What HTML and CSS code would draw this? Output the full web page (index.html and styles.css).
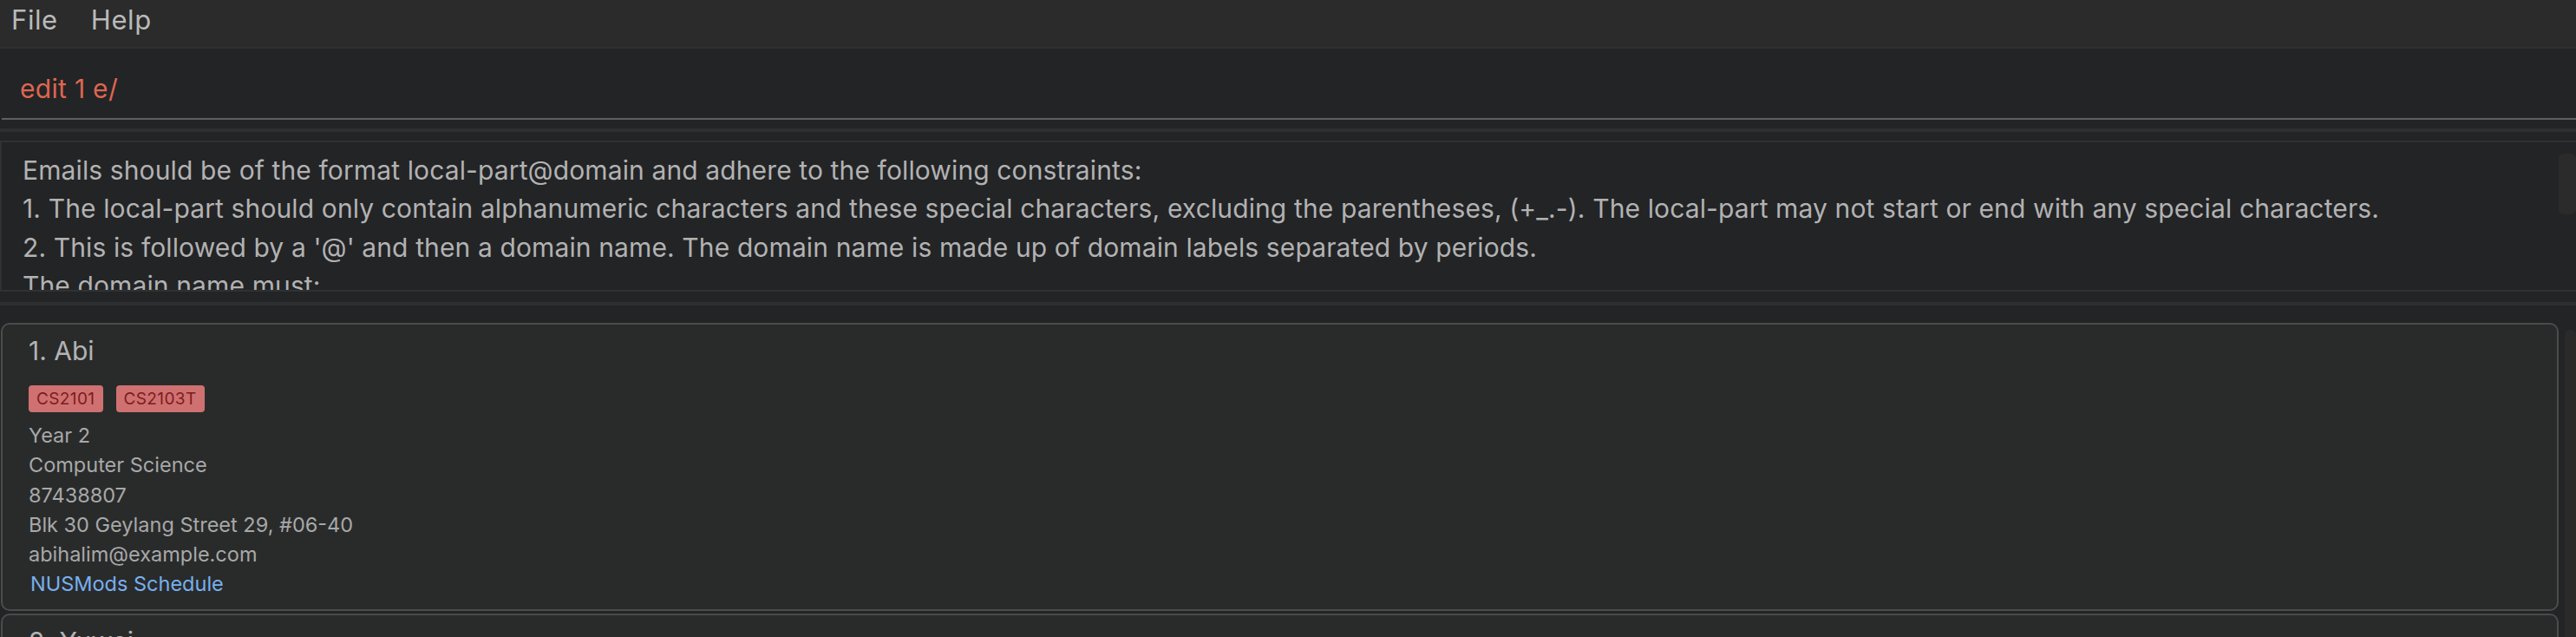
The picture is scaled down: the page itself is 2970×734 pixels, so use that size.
FILE: index.html
```html
<!DOCTYPE html>
<html lang="en">
<head>
<meta charset="utf-8">
<title>Address Book</title>
<link rel="stylesheet" href="styles.css">
</head>
<body>
<div class="app">
  <nav class="menubar">
    <span class="menu-item">File</span>
    <span class="menu-item">Help</span>
  </nav>
  <div class="command">
    <div class="command-field"><span class="cmd-text">edit 1 e/</span></div>
  </div>
  <div class="divider divider-top"></div>
  <div class="result">
    <div class="result-text"><div class="line">Emails should be of the format local-part@domain and adhere to the following constraints:</div><div class="line">1. The local-part should only contain alphanumeric characters and these special characters, excluding the parentheses, (+_.-). The local-part may not start or end with any special characters.</div><div class="line">2. This is followed by a '@' and then a domain name. The domain name is made up of domain labels separated by periods.</div><div class="line">The domain name must:</div></div>
    <div class="result-scroll"><div class="result-thumb"></div></div>
  </div>
  <div class="divider divider-bottom"></div>
  <div class="list">
    <div class="cards">
      <div class="card">
        <div class="card-name">1. Abi</div>
        <div class="tags">
          <span class="tag">CS2101</span>
          <span class="tag">CS2103T</span>
        </div>
        <div class="details">
          <div class="detail">Year 2</div>
          <div class="detail">Computer Science</div>
          <div class="detail">87438807</div>
          <div class="detail">Blk 30 Geylang Street 29, #06-40</div>
          <div class="detail">abihalim@example.com</div>
          <div class="detail"><span class="link">NUSMods Schedule</span></div>
        </div>
      </div>
      <div class="card">
        <div class="card-name">2. Yuwei</div>
      </div>
    </div>
    <div class="list-scroll"></div>
  </div>
</div>
</body>
</html>
```
FILE: styles.css
```css
html, body {
  margin: 0;
  padding: 0;
}
body {
  width: 2970px;
  height: 734px;
  overflow: hidden;
  background: #232426;
  font-family: Inter, "Noto Sans", "DejaVu Sans", sans-serif;
}
.app {
  display: flex;
  flex-direction: column;
  width: 2970px;
  height: 734px;
  overflow: hidden;
}
.menubar {
  display: flex;
  gap: 38px;
  height: 56px;
  box-sizing: border-box;
  padding: 4px 0 0 13px;
  background: #2b2b2b;
  border-bottom: 2px solid #2f3032;
}
.menu-item {
  font-size: 31px;
  line-height: 37px;
  letter-spacing: 0.6px;
  color: #bababa;
}
.command {
  padding-left: 2px;
  background: #232426;
}
.command-field {
  height: 82px;
  box-sizing: border-box;
  border-bottom: 2px solid #5a6264;
  padding: 28px 0 0 21px;
}
.cmd-text {
  display: block;
  font-size: 30px;
  line-height: 36px;
  letter-spacing: 0.3px;
  color: #de6650;
}
.divider {
  height: 4px;
  background: #2e2f31;
}
.divider-top {
  margin: 10px 0;
}
.divider-bottom {
  margin: 12px 0 0;
}
.result {
  display: flex;
  height: 174px;
  box-sizing: border-box;
  border: 2px solid #2f3133;
  border-right: none;
}
.result-text {
  flex: 1;
  overflow: hidden;
  padding: 10px 0 0 24px;
  font-size: 30px;
  line-height: 44.3px;
  letter-spacing: 0.12px;
  color: #b2b2b2;
  white-space: pre;
}
.result-scroll {
  width: 20px;
}
.result-thumb {
  margin-top: 13px;
  height: 70px;
  background: #2b2b2c;
  border-radius: 6px;
}
.list {
  flex: 1;
  display: flex;
  padding-top: 20px;
  min-height: 0;
}
.cards {
  flex: 1;
  padding-left: 1px;
  display: flex;
  flex-direction: column;
  gap: 3px;
}
.list-scroll {
  width: 13px;
  margin: 8px 0 0 7px;
  background: #2a2a2a;
  border-radius: 6px 6px 0 0;
}
.card {
  flex-shrink: 0;
  background: #292b2b;
  border: 2px solid #4b4b4b;
  border-radius: 10px;
  padding: 12px 0 11px 30px;
}
.card-name {
  font-size: 30px;
  line-height: 36px;
  color: #b3b3b3;
}
.tags {
  display: flex;
  gap: 15px;
  margin-top: 22px;
}
.tag {
  height: 31px;
  box-sizing: border-box;
  padding: 0 9px;
  font-size: 19px;
  line-height: 31px;
  letter-spacing: 0.4px;
  color: #7e1c1c;
  background: #cf7171;
  border-radius: 4px;
}
.details {
  margin-top: 10px;
}
.detail {
  font-size: 23.5px;
  line-height: 34.3px;
  color: #a8a8a8;
}
.link {
  padding-left: 2px;
  color: #78b0ee;
}
```
